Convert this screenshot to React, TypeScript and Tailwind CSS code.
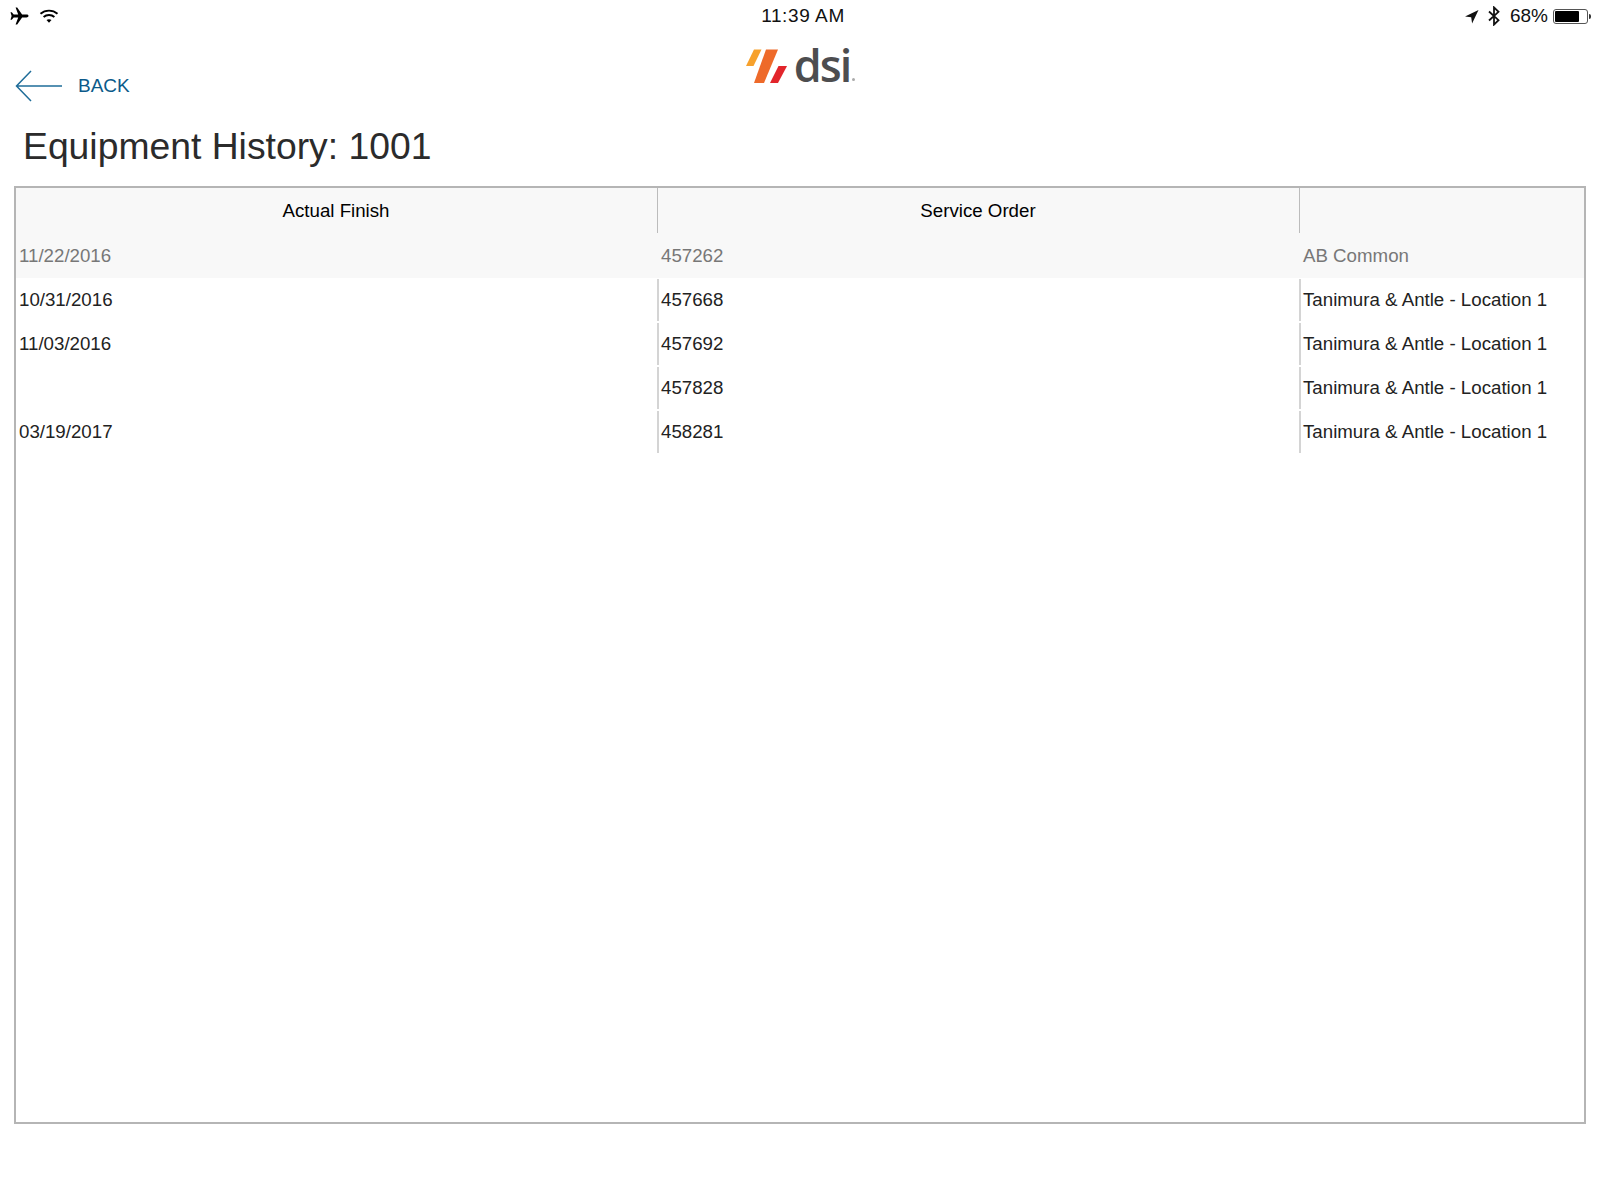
import React from "react";

const rows = [
  { finish: "11/22/2016", order: "457262", customer: "AB Common", muted: true },
  { finish: "10/31/2016", order: "457668", customer: "Tanimura & Antle - Location 1" },
  { finish: "11/03/2016", order: "457692", customer: "Tanimura & Antle - Location 1" },
  { finish: "", order: "457828", customer: "Tanimura & Antle - Location 1" },
  { finish: "03/19/2017", order: "458281", customer: "Tanimura & Antle - Location 1" },
];

const Plane = () => (
  <svg width="20" height="18" viewBox="0 0 20 18" fill="#000">
    <path d="M19.5 9c0-.9-1-1.4-2-1.4h-4.4L8.2.6H6.6l2.6 7H4.7L2.8 5.3H1.5L2.6 9 1.5 12.7h1.3l1.9-2.3h4.5l-2.6 7h1.6l4.9-7h4.4c1 0 2-.5 2-1.4z" />
  </svg>
);

const Wifi = () => (
  <svg width="20" height="15" viewBox="0 0 20 15" fill="none" stroke="#000">
    <path d="M1.500 4.800C6.200.6 13.800.6 18.500 4.800" strokeWidth="1.9" />
    <path d="M4.600 8C7.600 5.400 12.400 5.400 15.400 8" strokeWidth="1.9" />
    <path d="M7.500 11c1.500-1.100 3.500-1.100 5 0L10 13.800z" fill="#000" stroke="none" />
  </svg>
);

const LocationArrow = () => (
  <svg width="15" height="15" viewBox="0 0 15 15" fill="#111">
    <path d="M14.500 1 1 7.600l6.200.6.9 6.300z" />
  </svg>
);

const Bluetooth = () => (
  <svg width="14" height="20" viewBox="0 0 14 20" fill="none" stroke="#111" strokeWidth="1.8">
    <path d="M2 5.500 11.500 14.200 7 18.600V1.400l4.500 4.400L2 14.500" />
  </svg>
);

const Battery = () => (
  <div className="flex items-center">
    <div className="flex h-[15px] w-[35px] rounded-[3px] border border-[#555] p-[1px]">
      <div className="h-full w-[24px] rounded-[1px] bg-black" />
    </div>
    <div className="ml-[1px] h-[5px] w-[2px] rounded-r-full bg-[#333]" />
  </div>
);

const BackArrow = () => (
  <svg width="48" height="32" viewBox="0 0 48 32" fill="none" stroke="#1f6d99" strokeWidth="1.5">
    <path d="M47 16H1.500M16 1 1.500 16 16 31" />
  </svg>
);

const Logo = () => (
  <div className="flex items-end">
    <svg width="48" height="36" viewBox="0 0 48 36" className="mb-[1px]">
      <path d="M9 1.500h7.500L8.500 18H1z" fill="#f7a12c" />
      <path d="M21 1.500h12L19 35H9z" fill="#ee6a2a" />
      <path d="M33.500 18H42L33 35H25z" fill="#e2252b" />
    </svg>
    <span className="ml-[1px] font-['Open_Sans',sans-serif] text-[45px] leading-[40px] font-semibold tracking-[-2px] text-[#4d4d4f]">dsi</span>
    <div className="mb-[4px] ml-[2px] size-[3px] rounded-full bg-[#aaa]" />
  </div>
);

export default function App() {
  return (
    <div className="h-[1200px] w-[1600px] bg-white font-['Liberation_Sans',sans-serif]">
      {/* Status bar */}
      <div className="grid h-[32px] grid-cols-3 items-center px-[9px] text-[19px] text-[#111]">
        <div className="flex items-center gap-[10px]">
          <Plane />
          <Wifi />
        </div>
        <div className="pl-[6px] text-center text-[19px] tracking-[0.6px]">11:39 AM</div>
        <div className="flex items-center justify-end">
          <LocationArrow />
          <div className="ml-[8px]">
            <Bluetooth />
          </div>
          <span className="ml-[9px]">68%</span>
          <div className="ml-[5px]">
            <Battery />
          </div>
        </div>
      </div>

      {/* Nav */}
      <div className="grid h-[72px] grid-cols-3 px-[15px]">
        <div className="mt-[38px] flex h-[32px] items-center gap-[15px]">
          <BackArrow />
          <span className="text-[19px] text-[#0b5a8a]">BACK</span>
        </div>
        <div className="flex items-start justify-center pt-[13px]">
          <Logo />
        </div>
      </div>

      <h1 className="mt-[19px] h-[63px] pl-[23px] text-[37.300px] leading-[46px] text-[#2b2b2b]">Equipment History: 1001</h1>

      {/* Table */}
      <div className="mx-[14px] h-[938px] border-2 border-[#b5b5b5]">
        <div className="grid h-[45px] grid-cols-[641px_642px_1fr] bg-[#f8f8f8] text-[18.700px] text-black">
          <div className="flex items-center justify-center pt-[1px] pr-[1px]">Actual Finish</div>
          <div className="flex items-center justify-center border-l border-[#bcbcbc] pt-[1px] pr-[1px]">Service Order</div>
          <div className="border-l border-[#bcbcbc]" />
        </div>
        {rows.map((row) => (
          <div
            key={row.order}
            className={
              row.muted
                ? "grid h-[45px] grid-cols-[641px_642px_1fr] items-stretch bg-[#f8f8f8] pt-[2px] text-[18.700px] text-[#777]"
                : "grid h-[44px] grid-cols-[641px_642px_1fr] items-stretch text-[18.700px] text-[#222]"
            }
          >
            <div className="flex items-center pl-[3px]">{row.finish}</div>
            <div className={row.muted ? "flex items-center pl-[4px]" : "my-[1px] flex items-center border-l-2 border-[#d4d4d4] pl-[2px]"}>{row.order}</div>
            <div className={row.muted ? "flex items-center pl-[4px]" : "my-[1px] flex items-center border-l-2 border-[#d4d4d4] pl-[2px]"}>{row.customer}</div>
          </div>
        ))}
      </div>
    </div>
  );
}
